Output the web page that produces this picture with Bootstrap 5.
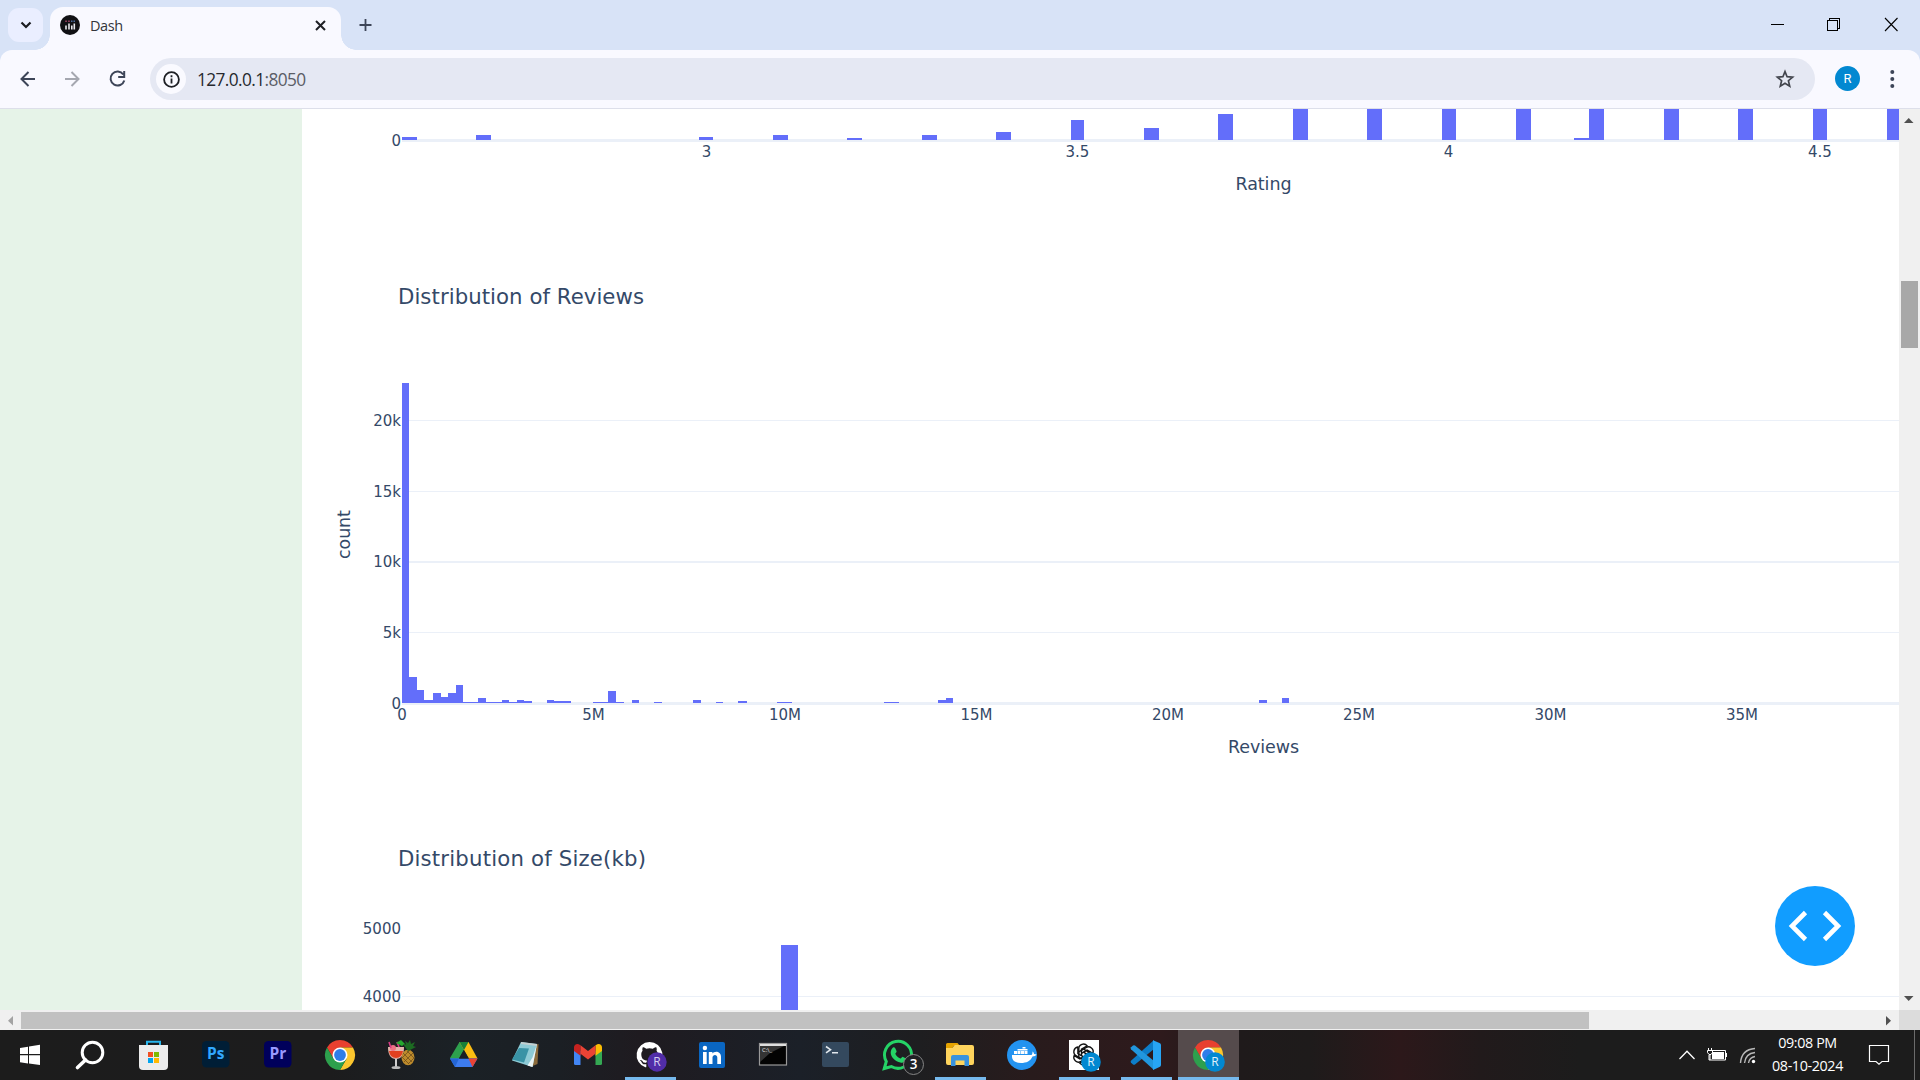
<!DOCTYPE html>
<html lang="en">
<head>
<meta charset="utf-8">
<title>Dash</title>
<link href="https://cdn.jsdelivr.net/npm/bootstrap@5.3.0/dist/css/bootstrap.min.css" rel="stylesheet">
<style>
  body { width: 1920px; height: 1080px; font-family: "Open Sans", "Noto Sans", sans-serif; }
  svg { display: block; flex: none; }
  .tabstrip { height: 50px; background: #d8e3f7; }
  .tab-search { width: 35px; height: 34px; margin: 8px 0 0 8px; border-radius: 11px; background: #eaeeff; }
  .page-tab { width: 291px; height: 43px; margin: 7px 0 0 7px; border-radius: 13px 13px 0 0; background: #f9f9ff; padding: 0 15px 7px 10px; }
  .page-tab::before, .page-tab::after { content: ""; position: absolute; bottom: 0; width: 15px; height: 15px; }
  .page-tab::before { left: -15px; background: radial-gradient(circle at 0 0, transparent 14.5px, #f9f9ff 15px); }
  .page-tab::after { right: -15px; background: radial-gradient(circle at 100% 0, transparent 14.5px, #f9f9ff 15px); }
  .tab-title { font-size: 14.5px; line-height: 20px; margin-left: 10px; padding-top: 1px; color: #33353b; letter-spacing: -.4px; }
  .new-tab { margin-left: 18px; }
  .toolbar-wrap { height: 59px; background: #d8e3f7; }
  .toolbar { height: 59px; background: #f9f9ff; border-radius: 12px 12px 0 0; border-bottom: 1px solid #dddfea; }
  .omnibox { width: 1665px; height: 42px; margin: 8px 0 0 24px; border-radius: 21px; background: #e5e8f3; }
  .site-info { width: 30px; height: 30px; margin-left: 6px; background: #fafaff; }
  .url { font-size: 17.3px; letter-spacing: -.6px; color: #26282e; margin-left: 11px; padding-top: 1px; line-height: 24px; }
  .url span { color: #5a5d66; }
  .bookmark { margin-right: 20px; }
  .avatar { width: 25px; height: 25px; margin: 16px 0 0 20px; background: #0288d1; color: #fff; font: 13px Roboto, sans-serif; }
  .kebab { margin-left: 27px; }
  .viewport { height: 921px; }
  .page-row { height: 901px; }
  .side-panel { width: 302px; background: #e6f3e8; }
  .plots { width: 1597px; background: #fff; }
  .plots text { font-family: Verdana, "DejaVu Sans", sans-serif; fill: #344968; font-size: 15px; }
  .plots .axis-title { font-size: 17.5px; text-anchor: middle; }
  .plots .plot-title { font-size: 21.25px; }
  .plots .xt { text-anchor: middle; }
  .plots .yt { text-anchor: end; }
  .grid { fill: #ebf0f8; shape-rendering: crispEdges; }
  .bars { fill: #636efa; shape-rendering: crispEdges; }
  .vscroll { width: 21px; background: #f0f0f0; }
  .vthumb { width: 17px; height: 67px; background: #a8a8a8; margin: 155px auto 0 2px; }
  .hscroll { height: 20px; background: #f0f0f0; }
  .hthumb { width: 1568px; height: 17px; margin-top: 2px; background: #c1c1c1; }
  .corner { width: 21px; height: 20px; background: #dcdcdc; }
  .debug-btn { width: 80px; height: 80px; right: 65px; top: 886px; background: #119dff; }
  .taskbar { height: 50px; color: #fff; background: linear-gradient(90deg, #1c1c1c 0, #1c1c1d 330px, #1b2126 460px, #1b1f24 560px, #1f1b20 640px, #1b2028 800px, #1e1e20 920px, #281b1c 1030px, #2e1a1c 1160px, #1f1a1b 1240px, #1e1b1b 1310px, #2c181a 1400px, #211a1b 1480px, #1c1c1c 1580px); }
  .task { width: 62px; height: 50px; }
  .task-start { width: 60px; }
  .task-open::after { content: ""; position: absolute; bottom: 0; left: 7px; width: 51px; height: 3px; background: #76b9ed; }
  .task-on { width: 61px; margin-left: 2px; background: #554b4c; }
  .task-on::after { left: 0; width: 61px; }
  .task svg text { font-family: "Open Sans", sans-serif; }
  .clock { font-size: 14.3px; line-height: 23px; letter-spacing: -.36px; width: 90px; padding: 1px 0 0 1px; }
  .peek { width: 1px; margin-right: 5px; background: #6b6b6b; }
</style>
<script src="https://cdn.jsdelivr.net/npm/bootstrap@5.3.0/dist/js/bootstrap.bundle.min.js"></script>
</head>
<body class="overflow-hidden m-0 position-relative">

<header class="tabstrip d-flex">
  <div class="tab-search d-flex align-items-center justify-content-center">
    <svg width="12" height="10" viewBox="0 0 12 10"><path d="M1.5 2.5 6 7l4.500-4.500" fill="none" stroke="#1a1b20" stroke-width="2.200"/></svg>
  </div>
  <div class="page-tab d-flex align-items-center position-relative">
    <svg width="20" height="20" viewBox="0 0 20 20"><circle cx="10" cy="10" r="10" fill="#111114"/><path d="M6 10.500v4M9 8.500v6M11.800 10.500v4M14.300 8.500v6" stroke="#e8e8ec" stroke-width="1.600"/><path d="M5.300 6.200h1.500M8.200 6.200h1.500" stroke="#a8446a" stroke-width="1.400"/><path d="M11 6.200h1.500M13.500 6.200H15" stroke="#4a6a9a" stroke-width="1.400"/></svg>
    <span class="tab-title flex-grow-1">Dash</span>
    <svg width="11" height="11" viewBox="0 0 11 11"><path d="M1 1l9 9M10 1l-9 9" stroke="#1f2025" stroke-width="2"/></svg>
  </div>
  <svg class="new-tab me-auto" width="13" height="50" viewBox="0 0 13 50"><path d="M6.500 19v12M.5 25h12" stroke="#3d4558" stroke-width="1.800"/></svg>
  <svg width="150" height="50" viewBox="1770 0 150 50" fill="none" stroke="#000"><path d="M1771 24.500h13M1829.500 20.500v-2h10v10h-2M1827.500 20.500h10v10h-10z" shape-rendering="crispEdges"/><path d="M1885 18l12.500 13M1897.500 18l-12.500 13" stroke-width="1.100"/></svg>
</header>

<div class="toolbar-wrap">
  <div class="toolbar d-flex">
    <svg width="126" height="58" viewBox="0 50 126 58" fill="none" stroke="#3d4558" stroke-width="2"><path d="M35 79H21.500M28.500 72l-7 7 7 7"/><path d="M65 79h13.500M71.500 72l7 7-7 7" stroke="#a5a7b0"/><path d="M123.300 74.500A7 7 0 1 0 124.300 80.500M124.200 71v6h-6"/></svg>
    <div class="omnibox d-flex align-items-center">
      <div class="site-info rounded-circle d-flex align-items-center justify-content-center">
        <svg width="17" height="17" viewBox="0 0 17 17"><circle cx="8.500" cy="8.500" r="7.400" fill="none" stroke="#1d1f24" stroke-width="1.800"/><path d="M8.500 7.500v5M8.500 4.300v1.900" stroke="#1d1f24" stroke-width="1.800"/></svg>
      </div>
      <div class="url flex-grow-1">127.0.0.1<span>:8050</span></div>
      <svg class="bookmark" width="20" height="20" viewBox="0 0 20 20"><path d="M10 2.600l2.100 5.100 5.500.4-4.200 3.600 1.300 5.400L10 14.200l-4.700 2.900 1.300-5.400-4.200-3.600 5.500-.4z" fill="none" stroke="#42454d" stroke-width="1.700"/></svg>
    </div>
    <div class="avatar rounded-circle d-flex align-items-center justify-content-center">R</div>
    <svg class="kebab" width="10" height="58" viewBox="1887 50 10 58" fill="#3d4558"><circle cx="1892.300" cy="72" r="2"/><circle cx="1892.300" cy="79" r="2"/><circle cx="1892.300" cy="86" r="2"/></svg>
  </div>
</div>

<main class="viewport d-flex flex-column">
  <div class="page-row d-flex">
    <aside class="side-panel"></aside>
    <section class="plots">
      <svg width="1597" height="124" viewBox="302 109 1597 124">
        <rect class="grid" x="402" y="139" width="1497" height="3"/>
        <path class="bars" data-chart="rating"/>
        <text class="yt" x="401" y="146">0</text>
        <text class="xt" x="706.500" y="157">3</text><text class="xt" x="1077.500" y="157">3.5</text><text class="xt" x="1448.500" y="157">4</text><text class="xt" x="1820" y="157">4.5</text>
        <text class="axis-title" x="1263.500" y="190" textLength="56">Rating</text>
      </svg>
      <svg width="1597" height="562" viewBox="302 233 1597 562">
        <text class="plot-title" x="398" y="304" textLength="246">Distribution of Reviews</text>
        <path class="grid" d="M402 420h1497v1H402zM402 491h1497v1H402zM402 561h1497v2H402zM402 632h1497v1H402zM402 702h1497v3H402z"/>
        <path class="bars" data-chart="reviews"/>
        <text class="yt" x="401" y="426">20k</text><text class="yt" x="401" y="497">15k</text><text class="yt" x="401" y="567">10k</text><text class="yt" x="401" y="638">5k</text><text class="yt" x="401" y="709">0</text>
        <text class="xt" x="402" y="720">0</text><text class="xt" x="593.500" y="720">5M</text><text class="xt" x="785" y="720">10M</text><text class="xt" x="976.500" y="720">15M</text><text class="xt" x="1168" y="720">20M</text><text class="xt" x="1359" y="720">25M</text><text class="xt" x="1550.500" y="720">30M</text><text class="xt" x="1742" y="720">35M</text>
        <text class="axis-title" x="1263.500" y="753" textLength="71">Reviews</text>
        <text class="axis-title" transform="translate(349.500 534.500) rotate(-90)" textLength="49">count</text>
      </svg>
      <svg width="1597" height="215" viewBox="302 795 1597 215">
        <text class="plot-title" x="398" y="866" textLength="248">Distribution of Size(kb)</text>
        <rect class="grid" x="402" y="996" width="1497" height="1"/>
        <path class="bars" data-chart="size"/>
        <text class="yt" x="401" y="934">5000</text><text class="yt" x="401" y="1002">4000</text>
      </svg>
    </section>
    <div class="vscroll d-flex flex-column">
      <svg width="21" height="17" viewBox="0 0 21 17"><path d="M5 14h9.500L9.700 9z" fill="#505050"/></svg>
      <div class="vthumb"></div>
      <svg width="21" height="17" viewBox="0 0 21 17" class="mt-auto"><path d="M5 3h9.500L9.700 8z" fill="#505050"/></svg>
    </div>
  </div>
  <div class="hscroll d-flex">
    <svg width="21" height="20" viewBox="0 0 21 20"><path d="M13 6v9.500L8 10.700z" fill="#a3a3a3"/></svg>
    <div class="hthumb"></div>
    <svg width="21" height="20" viewBox="0 0 21 20" class="ms-auto"><path d="M8 6v9.500l5-4.800z" fill="#505050"/></svg>
    <div class="corner"></div>
  </div>
</main>

<div class="debug-btn position-absolute rounded-circle">
  <svg width="80" height="80" viewBox="0 0 80 80"><path d="M30.500 26.500 17 40l13.500 13.500M49.500 26.500 63 40 49.500 53.500" fill="none" stroke="#fff" stroke-width="4.600"/></svg>
</div>

<footer class="taskbar d-flex">
  <div class="task task-start"><svg width="60" height="50" viewBox="0 1030 60 50" fill="#fff"><path d="M20 1048l8-1.300v7.300h-8zM29 1046.500l11-1.700v9.200H29zM20 1055.300h8v8.200l-8-1.300zM29 1055.300h11v9.700l-11-1.500z"/></svg></div>
  <div class="task"><svg width="62" height="50" viewBox="60 1030 62 50" fill="none" stroke="#fff" stroke-width="3"><circle cx="92.500" cy="1052.500" r="10.300"/><path d="M85.500 1060l-8 7.500" stroke-width="3.600" stroke-linecap="round"/></svg></div>
  <div class="task"><svg width="62" height="50" viewBox="122 1030 62 50"><path d="M147 1046v-4.200h13v4.200" fill="none" stroke="#28b5ec" stroke-width="2"/><path d="M139 1045h29v21q0 4-4 4h-21q-4 0-4-4z" fill="#ececec"/><path d="M148 1052h5v5h-5z" fill="#f25022"/><path d="M154 1052h5v5h-5z" fill="#7fba00"/><path d="M148 1058h5v5h-5z" fill="#00a4ef"/><path d="M154 1058h5v5h-5z" fill="#ffb900"/></svg></div>
  <div class="task"><svg width="62" height="50" viewBox="184 1030 62 50"><rect x="202" y="1041" width="27.500" height="26.500" rx="4.500" fill="#001e36"/><text x="215.800" y="1059" text-anchor="middle" font-size="15.500" font-weight="700" fill="#31a8ff">Ps</text></svg></div>
  <div class="task"><svg width="62" height="50" viewBox="246 1030 62 50"><rect x="264" y="1041" width="27.500" height="26.500" rx="4.500" fill="#00005b"/><text x="277.800" y="1059" text-anchor="middle" font-size="15.500" font-weight="700" fill="#9999ff">Pr</text></svg></div>
  <div class="task"><svg width="62" height="50" viewBox="-32 -25 62 50"><g id="chrome"><path d="M-13-7.500A15 15 0 0 1 13-7.500H0L-6.500 3.700z" fill="#e8402f"/><path d="M-13-7.500-6.500 3.700 0 7.500V15A15 15 0 0 1-13-7.500z" fill="#2da04d"/><path d="M6.500 3.700 0 15A15 15 0 0 0 13-7.500H0z" fill="#fcc62e"/><path d="M-6.500 3.700H6.500L0 15z" fill="#2da04d"/><circle r="7.500" fill="#fff"/><circle r="5.900" fill="#2f7de9"/></g></svg></div>
  <div class="task"><svg width="62" height="50" viewBox="370 1030 62 50"><path d="M388 1047h16q0 12-8 12t-8-12" fill="#e3b4aa"/><path d="M389 1051h14q-1 7-7 7t-7-7" fill="#e2401f"/><circle cx="393" cy="1048" r="3" fill="#ed7184"/><path d="M391 1048l-2-6M399 1047l-2-5" stroke="#d93a86" stroke-width="1.600"/><path d="M396 1043l5-3 4 4-3 2z" fill="#25a92e"/><path d="M396 1059v8" stroke="#cfcfcf" stroke-width="2"/><ellipse cx="396" cy="1067.500" rx="4.500" ry="1.600" fill="#bcbcbc"/><ellipse cx="408" cy="1057.500" rx="6.500" ry="7.700" fill="#bd8b2c"/><path d="M403 1053l9 9M402 1057l7 7M407 1051l7 7M413 1053l-9 9M410 1050l-8 8M414 1058l-6 6" stroke="#72501a" stroke-width=".8"/><path d="M408 1051l-5-7 3 .5-1-3.500 3 2 2-3 1 4 4-2-2 4 3 1z" fill="#1d6b22"/></svg></div>
  <div class="task"><svg width="62" height="50" viewBox="432 1030 62 50"><path d="M459.500 1042h9l-4.500 7.500-9 16-5-7.500z" fill="#2da04d"/><path d="M459.500 1042h9l9 16.500h-9z" fill="#fcbd12"/><path d="M459.500 1042h9L464 1050z" fill="#188038"/><path d="M450 1058.500h27.500l-5 8.500h-17.500z" fill="#3d7cf0"/><path d="M468.500 1058.500h9l-5 8.500z" fill="#ea4335"/><path d="M464 1050l5 8.500h-10z" fill="#1c2025"/><path d="M450 1058.500h9l-4 8.500z" fill="#2466d6"/></svg></div>
  <div class="task"><svg width="62" height="50" viewBox="494 1030 62 50"><path d="M534 1045l4.500-1-1 20-5 2z" fill="#8b6b3c"/><path d="M521 1042l16 2-4.500 23-20.500-6.500z" fill="#8ecbd6"/><path d="M519 1048l10 .5-5 14-12-3z" fill="#3993a6"/><path d="M537 1044l-4.500 23-5-1.500 5-8z" fill="#ecf4f5"/><path d="M521 1042l16 2v2l-16-2z" fill="#c3cfd0"/></svg></div>
  <div class="task"><svg width="62" height="50" viewBox="556 1030 62 50"><path d="M574 1047v16.500q0 1.500 1.500 1.500h5v-14z" fill="#4285f4"/><path d="M602 1047v16.500q0 1.500-1.500 1.500h-5v-14z" fill="#34a853"/><path d="M574 1051v-3.500c0-3.500 3.500-4.500 6-2.600l.5.400v10.500z" fill="#c5221f"/><path d="M602 1051v-3.500c0-3.500-3.500-4.500-6-2.600l-.5.400v10.500z" fill="#fbbc04"/><path d="M580.500 1045.300l7.500 5.700 7.500-5.700v8.500l-7.500 5.800-7.500-5.800z" fill="#ea4335"/></svg></div>
  <div class="task task-open position-relative"><svg width="62" height="50" viewBox="618 1030 62 50"><path d="M649.500 1042a13 13 0 0 0-4.100 25.300c.7.100.9-.3.900-.6v-2.500c-3.600.8-4.400-1.500-4.400-1.500-.6-1.500-1.400-1.900-1.400-1.900-1.200-.8.100-.8.100-.8 1.300.1 2 1.300 2 1.300 1.200 2 3 1.400 3.800 1.100.1-.8.500-1.400.8-1.700-2.900-.3-5.900-1.400-5.900-6.400 0-1.400.5-2.600 1.300-3.500-.1-.3-.6-1.700.1-3.400 0 0 1.100-.4 3.600 1.300a12 12 0 0 1 6.500 0c2.500-1.700 3.600-1.300 3.600-1.300.7 1.700.2 3.100.1 3.400.8.900 1.300 2.100 1.300 3.500 0 5-3 6.100-5.900 6.400.5.400.9 1.200.9 2.400v3.600c0 .3.200.8.900.6A13 13 0 0 0 649.500 1042" fill="#fff"/><circle cx="657" cy="1062" r="9.700" fill="#512da8"/><text x="657" y="1066.300" text-anchor="middle" font-size="12" fill="#d5cdf0">R</text></svg></div>
  <div class="task"><svg width="62" height="50" viewBox="680 1030 62 50"><rect x="699" y="1042" width="26" height="26" rx="2" fill="#0a66c2"/><path d="M703 1052h3.700v12H703zM708.800 1052h3.600v1.600c1.900-3.200 8.600-2.700 8.600 3.100v7.300h-3.700v-6.500c0-3.600-4.800-3.300-4.800 0v6.500h-3.700z" fill="#fff"/><circle cx="704.900" cy="1048" r="2.200" fill="#fff"/></svg></div>
  <div class="task"><svg width="62" height="50" viewBox="742 1030 62 50"><rect x="759.500" y="1043.500" width="27" height="21.500" fill="#030303" stroke="#999" stroke-width="1.200"/><path d="M760 1044h26v2h-26z" fill="#dedede"/><path d="M760 1046h24l-14 7-10 9z" fill="#343434"/><text x="762" y="1052" font-size="6" fill="#e5e5e5">C:\_</text></svg></div>
  <div class="task"><svg width="62" height="50" viewBox="804 1030 62 50"><rect x="822" y="1042" width="27" height="25" rx="2" fill="#34495e"/><path d="M826 1046.500l4.500 3.200-4.500 3.200M832 1052.700h6" fill="none" stroke="#e2e8ed" stroke-width="1.600"/></svg></div>
  <div class="task"><svg width="62" height="50" viewBox="866 1030 62 50"><path d="M884.300 1068.500l2-7a13.500 13.500 0 1 1 5 5z" fill="none" stroke="#25d366" stroke-width="3"/><path d="M893 1047.500c1.500-1 2.300.2 3.600 3.700.3.900-1.500 2-1.200 2.700 1 2.100 2.800 3.700 5 4.600.9.300 1.700-2 2.600-1.600 3.500 1.500 3.400 1.700 2.700 3.700-.7 1.700-3 2.600-5.300 2-5-1.200-9.300-5-9.700-9.500-.1-2.200 1-4.600 2.300-5.600" fill="#25d366"/><circle cx="913.500" cy="1064.500" r="10" fill="#202124" stroke="#858585"/><text x="913.500" y="1069.300" text-anchor="middle" font-size="13.500" font-weight="600" fill="#fff">3</text></svg></div>
  <div class="task task-open position-relative"><svg width="62" height="50" viewBox="928 1030 62 50"><path d="M946 1044.500q0-1.500 1.500-1.500h10l2.500 3h-6l-3 3h-5z" fill="#e6a300"/><path d="M946 1048h6l3-3h17q2 0 2 2v16q0 2-2 2h-24q-2 0-2-2z" fill="#ffd45d"/><path d="M951 1066v-9q0-2 2-2h14q2 0 2 2v9h-4.500v-5.500h-9v5.500z" fill="#3993df"/></svg></div>
  <div class="task"><svg width="62" height="50" viewBox="990 1030 62 50"><circle cx="1022" cy="1055" r="15" fill="#2393f0"/><path d="M1012 1055h19c1 0 1.700-1.500 1.400-3.500 1 .5 1.600 1.500 1.600 2.500 1 0 2 .2 2.500.6-.7 1.300-2 1.900-4 1.900-2 4.500-6 6.500-11.500 6.500-6.500 0-9.500-3-9-8z" fill="#fff"/><path d="M1014 1051h3v3h-3zM1017.500 1051h3v3h-3zM1021 1051h3v3h-3zM1024.500 1051h3v3h-3zM1017.500 1049h10v1.500h-10zM1022.500 1047h3v1.500h-3z" fill="#fff"/></svg></div>
  <div class="task task-open position-relative"><svg width="62" height="50" viewBox="1052 1030 62 50"><path d="M1069 1040h30v30h-30z" fill="#fff"/><g transform="translate(1083.500 1054.500)" fill="none" stroke="#111" stroke-width="1.400"><g id="petal"><path d="M-4.700 2.700V-5.500A4.700 4.700 0 0 1 3.700-8.600L-2-5.300V1.200"/></g><use href="#petal" transform="rotate(60)"/><use href="#petal" transform="rotate(120)"/><use href="#petal" transform="rotate(180)"/><use href="#petal" transform="rotate(240)"/><use href="#petal" transform="rotate(300)"/></g><circle cx="1091" cy="1062" r="9.800" fill="#0288d1"/><text x="1091" y="1066.300" text-anchor="middle" font-size="12" fill="#e2f3fc">R</text></svg></div>
  <div class="task task-open position-relative"><svg width="62" height="50" viewBox="1114 1030 62 50"><path d="M1154 1040v9l-19 15.500q-1 .7-2 0l-2-1.800q-.8-1 0-2z" fill="#0d7dc8"/><path d="M1154 1070v-9l-19-15.500q-1-.7-2 0l-2 1.800q-.8 1 0 2z" fill="#2196dd"/><path d="M1153 1040.200l6.500 2.700q1.500.7 1.500 2v20.200q0 1.300-1.500 2l-6.500 2.900z" fill="#27a5f4"/></svg></div>
  <div class="task task-open task-on position-relative"><svg width="61" height="50" viewBox="1178 1030 61 50"><use href="#chrome" x="1208" y="1055"/><circle cx="1215" cy="1062" r="9.800" fill="#0288d1"/><text x="1215" y="1066.300" text-anchor="middle" font-size="12" fill="#e2f3fc">R</text></svg></div>

  <div class="d-flex ms-auto">
    <svg width="85" height="50" viewBox="1677 1030 85 50" fill="none" stroke="#fff">
      <path d="M1679.500 1059l7.500-7.700 7.500 7.700" stroke-width="1.300"/>
      <path d="M1711 1050.500h14.500v9.500H1709v-5"/><path d="M1712 1052h12v7h-12z" fill="#fff" stroke="none"/><path d="M1726.500 1053v4M1708.500 1048v2.500M1711.500 1048v2.500M1707.500 1050.500h5v2l-1.500 2h-2l-1.500-2zM1710 1054v6"/>
      <g stroke="#b8b8b8" stroke-width="1.400"><path d="M1740.500 1063q1-13.500 14.500-14.500M1744.500 1063q1-9.500 10.500-10.500M1748.500 1063q1-5.700 6.500-6.500"/></g><circle cx="1753.500" cy="1061.500" r="1.700" fill="#fff" stroke="none"/>
    </svg>
    <div class="clock text-center">09:08 PM<br>08-10-2024</div>
    <svg width="62" height="50" viewBox="1852 1030 62 50" fill="none" stroke="#fff" stroke-width="1.200"><path d="M1869.500 1045.500h19v16h-6.500l-3 2.600-3-2.600h-6.500z"/></svg>
    <div class="peek"></div>
  </div>
</footer>

<script>
  // Each bin is [left, right, top]; every chart shares one baseline.
  const charts = {
    rating: { base: 140, bins: [[402,417,137],[476,491,135],[699,713,137],[773,788,135],[847,862,138],[922,937,135],[996,1011,132],[1071,1084,120],[1144,1159,128],[1218,1233,114],[1293,1308,109],[1367,1382,109],[1442,1456,109],[1516,1531,109],[1574,1589,138],[1589,1604,109],[1664,1679,109],[1738,1753,109],[1813,1827,109],[1887,1899,109]] },
    reviews: { base: 703, bins: [[402,409,383],[409,417,677],[417,424,690],[424,433,700],[433,441,693],[441,448,697],[448,456,693],[456,463,685],[463,478,702],[478,486,698],[486,502,702],[502,509,700],[509,517,702],[517,524,700],[524,532,701],[547,554,700],[554,571,701],[593,608,702],[608,616,691],[616,624,702],[632,639,700],[654,662,702],[693,701,700],[716,723,702],[738,747,701],[777,792,702],[884,899,702],[938,946,700],[946,953,698],[1259,1267,700],[1282,1289,698]] },
    size: { base: 1010, bins: [[781,798,945]] }
  };
  document.querySelectorAll('[data-chart]').forEach(el => {
    const { base, bins } = charts[el.dataset.chart];
    el.setAttribute('d', bins.map(([l, r, t]) => `M${l} ${t}H${r}V${base}H${l}z`).join(''));
  });
</script>
</body>
</html>
